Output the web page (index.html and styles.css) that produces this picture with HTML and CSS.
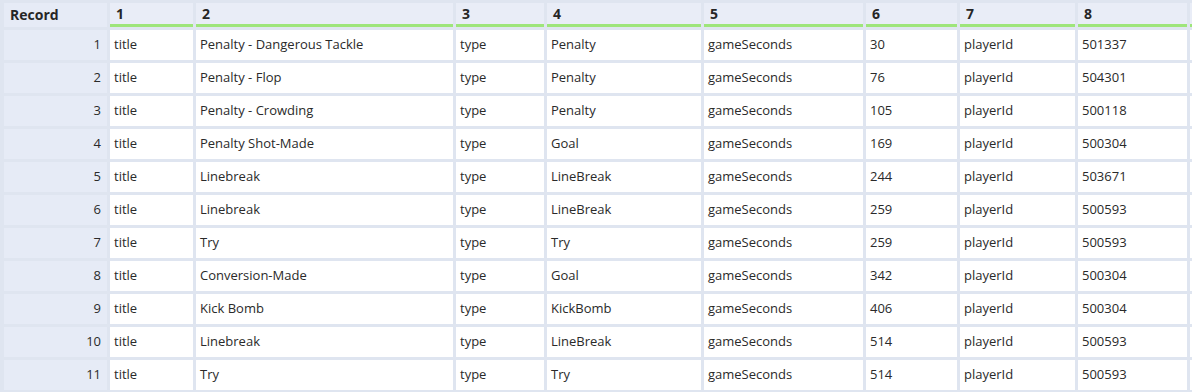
FILE: index.html
```html
<!DOCTYPE html>
<html>
<head>
<meta charset="utf-8">
<link rel="stylesheet" href="styles.css">
</head>
<body>
<div class="grid">
  <div class="hd rec">Record</div>
  <div class="hd">1</div><div class="hd">2</div><div class="hd">3</div><div class="hd">4</div><div class="hd">5</div><div class="hd">6</div><div class="hd">7</div><div class="hd">8</div><div class="hd"></div>

  <div class="rn">1</div><div class="c">title</div><div class="c">Penalty - Dangerous Tackle</div><div class="c">type</div><div class="c">Penalty</div><div class="c">gameSeconds</div><div class="c">30</div><div class="c">playerId</div><div class="c">501337</div><div class="c"></div>

  <div class="rn">2</div><div class="c">title</div><div class="c">Penalty - Flop</div><div class="c">type</div><div class="c">Penalty</div><div class="c">gameSeconds</div><div class="c">76</div><div class="c">playerId</div><div class="c">504301</div><div class="c"></div>

  <div class="rn">3</div><div class="c">title</div><div class="c">Penalty - Crowding</div><div class="c">type</div><div class="c">Penalty</div><div class="c">gameSeconds</div><div class="c">105</div><div class="c">playerId</div><div class="c">500118</div><div class="c"></div>

  <div class="rn">4</div><div class="c">title</div><div class="c">Penalty Shot-Made</div><div class="c">type</div><div class="c">Goal</div><div class="c">gameSeconds</div><div class="c">169</div><div class="c">playerId</div><div class="c">500304</div><div class="c"></div>

  <div class="rn">5</div><div class="c">title</div><div class="c">Linebreak</div><div class="c">type</div><div class="c">LineBreak</div><div class="c">gameSeconds</div><div class="c">244</div><div class="c">playerId</div><div class="c">503671</div><div class="c"></div>

  <div class="rn">6</div><div class="c">title</div><div class="c">Linebreak</div><div class="c">type</div><div class="c">LineBreak</div><div class="c">gameSeconds</div><div class="c">259</div><div class="c">playerId</div><div class="c">500593</div><div class="c"></div>

  <div class="rn">7</div><div class="c">title</div><div class="c">Try</div><div class="c">type</div><div class="c">Try</div><div class="c">gameSeconds</div><div class="c">259</div><div class="c">playerId</div><div class="c">500593</div><div class="c"></div>

  <div class="rn">8</div><div class="c">title</div><div class="c">Conversion-Made</div><div class="c">type</div><div class="c">Goal</div><div class="c">gameSeconds</div><div class="c">342</div><div class="c">playerId</div><div class="c">500304</div><div class="c"></div>

  <div class="rn">9</div><div class="c">title</div><div class="c">Kick Bomb</div><div class="c">type</div><div class="c">KickBomb</div><div class="c">gameSeconds</div><div class="c">406</div><div class="c">playerId</div><div class="c">500304</div><div class="c"></div>

  <div class="rn">10</div><div class="c">title</div><div class="c">Linebreak</div><div class="c">type</div><div class="c">LineBreak</div><div class="c">gameSeconds</div><div class="c">514</div><div class="c">playerId</div><div class="c">500593</div><div class="c"></div>

  <div class="rn">11</div><div class="c">title</div><div class="c">Try</div><div class="c">type</div><div class="c">Try</div><div class="c">gameSeconds</div><div class="c">514</div><div class="c">playerId</div><div class="c">500593</div><div class="c"></div>
</div>
</body>
</html>
```

FILE: styles.css
```css
html, body {
  margin: 0;
  padding: 0;
  background: #dfe5f0;
  overflow: hidden;
}

.grid {
  display: grid;
  grid-template-columns: 103px 83px 257px 88px 154px 159px 91px 115px 109px 200px;
  grid-template-rows: 24px;
  grid-auto-rows: 30px;
  gap: 3px;
  padding: 3px 0 0 4px;
  width: max-content;
  font-family: "Open Sans", "Noto Sans", "DejaVu Sans", sans-serif;
  font-size: 13px;
  color: #2a2a2a;
}

.hd {
  box-sizing: border-box;
  background: #e9edf7;
  border-bottom: 3px solid #9ee57b;
  font-weight: bold;
  font-size: 14px;
  color: #262626;
  padding: 0 6px;
  display: flex;
  align-items: center;
}

.hd.rec {
  border-bottom: none;
  background: #e6ebf6;
  padding-bottom: 2px;
}

.rn {
  background: #e6ebf6;
  display: flex;
  align-items: center;
  justify-content: flex-end;
  padding-right: 6px;
  padding-bottom: 2px;
}

.c {
  background: #ffffff;
  display: flex;
  align-items: center;
  padding-left: 4px;
  padding-bottom: 2px;
  white-space: nowrap;
  overflow: hidden;
}
```
